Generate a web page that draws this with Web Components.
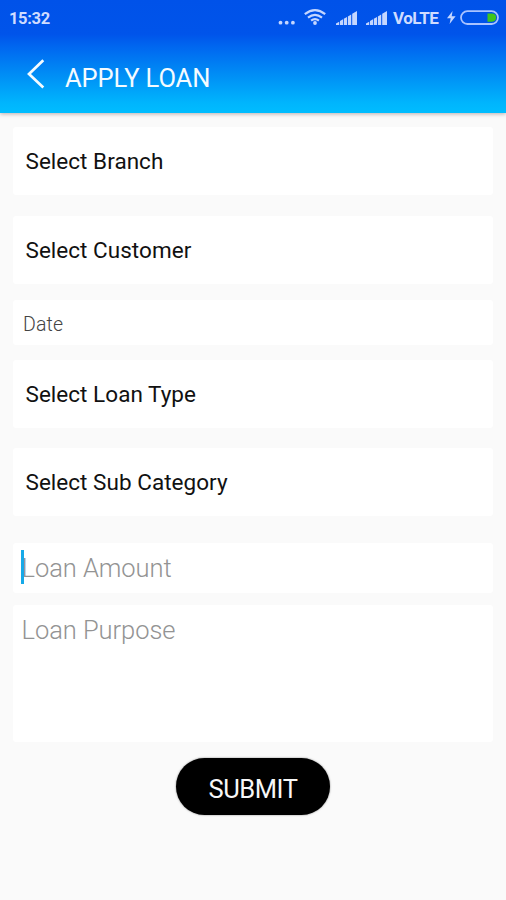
<!DOCTYPE html>
<html lang="en">
<head>
<meta charset="utf-8">
<title>Apply Loan</title>
<style>
html,body{margin:0;height:100%;background:#fafafa;font-family:Roboto,"Liberation Sans",sans-serif;overflow:hidden}
</style>
</head>
<body>
<loan-screen></loan-screen>
<script>
const define = (name, html) => customElements.define(name, class extends HTMLElement {
  constructor() {
    super();
    this.attachShadow({ mode: 'open' }).innerHTML = html;
  }
});

define('status-bar', `
<style>
:host{display:flex;justify-content:space-between;height:36px;box-sizing:border-box;padding-left:9px;color:#cfdcff;font-weight:700}
.time{font-size:16.5px;line-height:37px;letter-spacing:-.35px}
.right{display:flex;height:36px}
.volte{font-size:17px;line-height:36px;width:46px;letter-spacing:-.5px;white-space:nowrap}
svg{display:block}
</style>
<span class="time">15:32</span>
<div class="right">
<svg width="115" height="36" viewBox="278 0 115 36" fill="#c4d6ff">
  <circle cx="280.500" cy="22.700" r="1.900"/><circle cx="286.700" cy="22.700" r="1.900"/><circle cx="292.900" cy="22.700" r="1.900"/>
  <g fill="none" stroke="#c4d6ff" stroke-width="2.200">
    <path d="M304.800 14.200Q315 6.200 325.200 14.200"/><path d="M308 17.600Q315 12 322 17.600"/><path d="M311.100 20.600Q315 17.600 318.900 20.600"/>
  </g>
  <circle cx="315" cy="23" r="1.900"/>
  <path d="M336 25v-1.500l3.200-1.800V25zM340 25v-4l3-1.700V25zM343.800 25v-6.200l3.200-1.800V25zM347.900 25v-8.600l3.300-1.900V25zM352.200 25V13.700l4.800-2.700V25z"/>
  <path transform="translate(30 0)" d="M336 25v-1.500l3.200-1.800V25zM340 25v-4l3-1.700V25zM343.800 25v-6.200l3.200-1.800V25zM347.900 25v-8.600l3.300-1.900V25zM352.200 25V13.700l4.800-2.700V25z"/>
</svg>
<span class="volte">VoLTE</span>
<svg width="67" height="36" viewBox="439 0 67 36">
  <path d="M452.600 11L447 18.300h3.700L449.600 24l6-7.700h-3.900z" fill="#c4d6ff"/>
  <rect x="461" y="11.200" width="37" height="12.800" rx="6.400" fill="none" stroke="#a9c3ff" stroke-width="1.800"/>
  <path d="M487.500 13.500H492a4.100 4.100 0 0 1 0 8.200h-4.500z" fill="#3fc51c"/>
</svg>
</div>`);

define('app-header', `
<style>
:host{display:block;height:113px;color:#f4fbff;background:linear-gradient(#0052e9 0,#0054ea 34px,#0067f0 47px,#0092f6 78px,#00b5fd 103px,#00bdff 113px);box-shadow:0 1px 4px rgba(90,60,60,.4)}
.bar{display:flex;align-items:center;height:77px;padding-left:25px}
svg{margin-top:-1px;margin-right:18px}
.title{font-size:25.500px;line-height:30px;margin-top:6px;white-space:nowrap;letter-spacing:-.1px}
</style>
<status-bar></status-bar>
<div class="bar">
<svg width="22" height="32" viewBox="25 58 22 32"><path d="M43.300 60.300L29 74l14.300 13.500" fill="none" stroke="#f4fbff" stroke-width="2.700"/></svg>
<span class="title"><slot></slot></span>
</div>`);

define('select-field', `
<style>
:host{display:flex;align-items:center;height:68px;box-sizing:border-box;padding-left:12.500px;background:#fff;border-radius:3px;color:#111;font-size:22.500px;letter-spacing:.03px;white-space:nowrap}
</style><slot></slot>`);

define('text-field', `
<style>
:host{display:flex;box-sizing:border-box;background:#fff;border-radius:3px;color:#939393;font-size:25.500px;font-weight:300;line-height:30px;white-space:nowrap;letter-spacing:-.05px;padding:10px 0 0 8.500px;position:relative}
:host([focused])::before{content:"";position:absolute;left:8px;top:7px;width:3px;height:34px;background:#16a9e8}
:host([small]){font-size:19.500px;color:#444;padding:10px 0 0 10px;letter-spacing:.15px}
</style><slot></slot>`);

define('pill-button', `
<style>
:host{display:block}
button{display:block;width:154px;height:57px;padding:4px 0 0;border:0;border-radius:29px;background:#000;color:#f7f7f7;font:400 25.500px Roboto,"Liberation Sans",sans-serif;letter-spacing:-.45px;box-shadow:0 0 2px rgba(0,0,0,.5)}
</style><button><slot></slot></button>`);

define('loan-screen', `
<style>
:host{display:block;height:900px}
main{display:flex;flex-direction:column;padding:14px 13px 0}
.customer{margin-top:21px}
.date{margin-top:16px;height:45px}
.type{margin-top:15px}
.sub{margin-top:20px}
.amount{margin-top:27px;height:50px}
.purpose{margin-top:12px;height:137px}
.submit{margin-top:16px;align-self:center}
</style>
<app-header>APPLY LOAN</app-header>
<main>
<select-field>Select Branch</select-field>
<select-field class="customer">Select Customer</select-field>
<text-field small class="date">Date</text-field>
<select-field class="type">Select Loan Type</select-field>
<select-field class="sub">Select Sub Category</select-field>
<text-field focused class="amount">Loan Amount</text-field>
<text-field class="purpose">Loan Purpose</text-field>
<pill-button class="submit">SUBMIT</pill-button>
</main>`);
</script>
</body>
</html>
